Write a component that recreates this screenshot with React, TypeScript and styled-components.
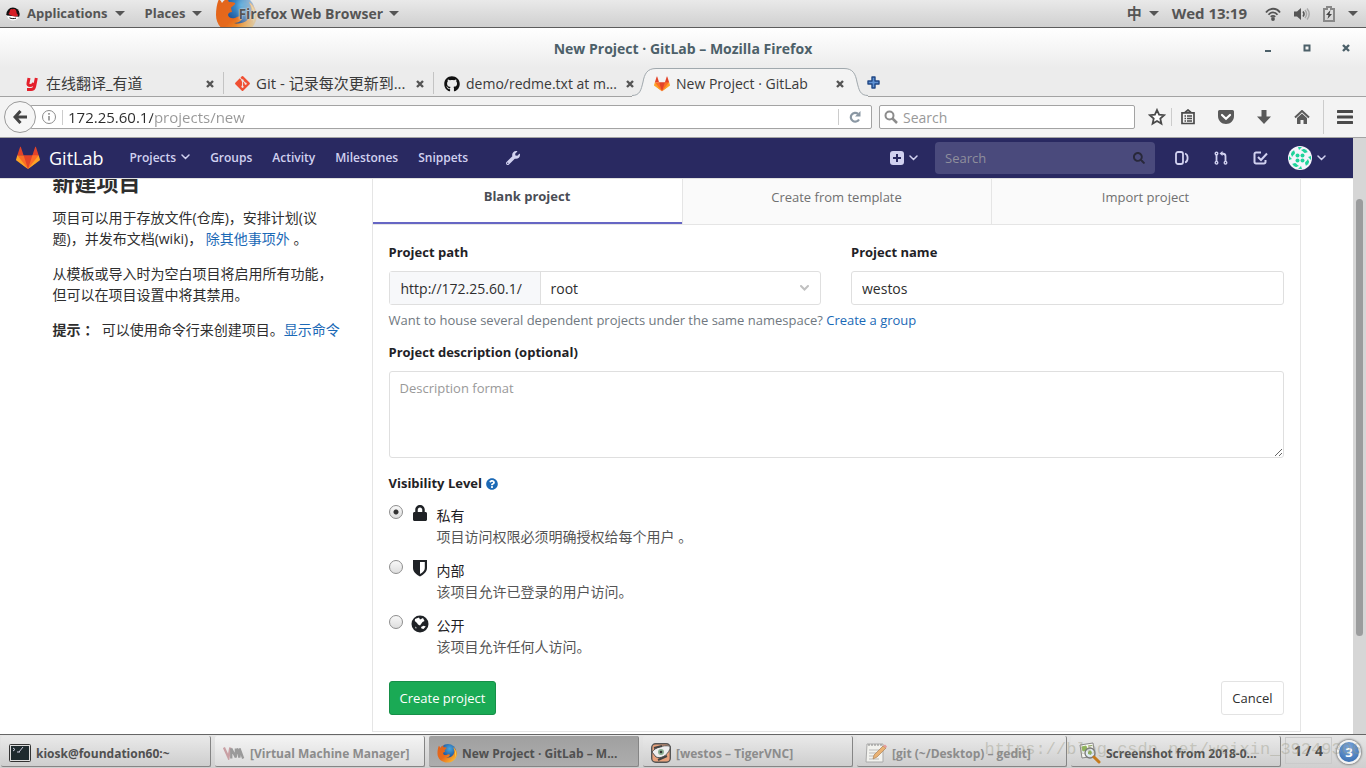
import React from "react";
import styled, { createGlobalStyle, css } from "styled-components";
import { FaGitAlt, FaGithub, FaWrench, FaQuestionCircle, FaSearch, FaLock } from "react-icons/fa";

const sans = `"Open Sans", "Noto Sans CJK SC", sans-serif`;

const GlobalStyle = createGlobalStyle`
  *, *::before, *::after { box-sizing: border-box; }
  body { margin: 0; overflow: hidden; font-family: ${sans}; font-size: 13px; line-height: 21px; color: #2e2e2e; background: #fff; }
  svg { display: block; flex: none; }
  button, input, select, textarea { font: inherit; color: inherit; }
  a { color: #1b69b6; text-decoration: none; }
`;

/* ---------- Desktop ---------- */

const Desktop = styled.div`
  display: flex;
  flex-direction: column;
  height: 100vh;
`;

const Panel = styled.header`
  flex: none;
  display: flex;
  justify-content: space-between;
  height: 28px;
  padding: 0 8px 0 6px;
  overflow: hidden;
  background: linear-gradient(#e9e9e9, #d0d0d0);
  border-bottom: 1px solid #5c5c5c;
`;

const PanelGroup = styled.div<{ $gap: number }>`
  display: flex;
  align-items: center;
  gap: ${(p) => p.$gap}px;
`;

const PanelButton = styled.button<{ $size?: number }>`
  display: flex;
  align-items: center;
  gap: 7px;
  padding: 0;
  border: 0;
  background: none;
  color: #555;
  font-size: ${(p) => p.$size ?? 13}px;
  font-weight: 700;
  white-space: nowrap;
`;

const AppButton = styled(PanelButton)`
  margin-left: -7px;
  gap: 6px;
`;

const Clock = styled(PanelButton)`
  margin-right: 5px;
`;

const PanelFirefox = styled.span`
  display: block;
  mask-image: linear-gradient(90deg, #000 50%, rgba(0, 0, 0, 0.2));
`;

const FirefoxLabel = styled.span`
  position: relative;
  margin-left: -25px;
  text-shadow: 0 0 2px #e4e4e4, 0 0 1px #e4e4e4;
`;

/* ---------- Browser window ---------- */

const Window = styled.main`
  flex: 1;
  min-height: 0;
  display: flex;
  flex-direction: column;
`;

const WindowTop = styled.div`
  flex: none;
  height: 69px;
  background: linear-gradient(#fff, #ececec 40px);
  border-bottom: 1px solid #a3a3a3;
`;

const TitleBar = styled.div`
  display: grid;
  grid-template-columns: 1fr auto 1fr;
  align-items: center;
  height: 40px;
  padding: 0 13px;
  color: #4c6069;
  font-size: 14px;
  font-weight: 700;
`;

const WindowButtons = styled.div`
  grid-column: 3;
  display: flex;
  justify-content: flex-end;
  gap: 24px;
`;

const WindowButton = styled.button`
  display: flex;
  align-items: center;
  justify-content: center;
  width: 15px;
  height: 16px;
  padding: 0;
  border: 0;
  background: none;
  color: #4c6069;
`;

const WindowTitle = styled.div`
  grid-column: 2;
`;

const TabStrip = styled.div`
  display: flex;
  height: 29px;
  padding-left: 14px;
`;

const TabItem = styled.div<{ $divider?: boolean; $size?: number }>`
  position: relative;
  flex: 0 1 210px;
  min-width: 0;
  display: flex;
  align-items: center;
  gap: 6px;
  padding: 2px 9px 0 10px;
  font-size: ${(p) => p.$size ?? 14}px;
  color: #3a3a3a;
  ${(p) =>
    p.$divider &&
    css`
      background: linear-gradient(#c4c4c4, #c4c4c4) right 4px / 1px 22px no-repeat;
    `}
`;

const TabShape = styled.svg`
  position: absolute;
  left: -12px;
  top: 0;
  width: 236px;
  height: 29px;
`;

const TabIcon = styled.span`
  position: relative;
  flex: none;
  width: 16px;
  display: flex;
  justify-content: center;
`;

const TabTitle = styled.span`
  position: relative;
  flex: 1;
  white-space: nowrap;
`;

const IconButton = styled.button<{ $w?: number }>`
  position: relative;
  flex: none;
  display: flex;
  align-items: center;
  justify-content: center;
  width: ${(p) => p.$w ?? 10}px;
  padding: 0;
  border: 0;
  background: none;
  color: #555;
`;

const NewTab = styled(IconButton)`
  margin-left: 13px;
`;

const Toolbar = styled.div`
  flex: none;
  display: flex;
  align-items: center;
  height: 41px;
  padding: 0 11px 0 4px;
  background: #f3f3f3;
  border-bottom: 1px solid #a3a3a3;
`;

const BackButton = styled.button`
  position: relative;
  z-index: 1;
  flex: none;
  display: flex;
  align-items: center;
  justify-content: center;
  width: 32px;
  height: 32px;
  padding: 0;
  border: 1px solid #9a9a9a;
  border-radius: 50%;
  background: #f6f6f6;
`;

const UrlBox = styled.div`
  flex: 1;
  display: flex;
  align-items: center;
  height: 24px;
  margin-left: -6px;
  padding-left: 11px;
  border: 1px solid #a3a3a3;
  border-radius: 2px;
  background: #fff;
`;

const Divider = styled.span<{ $h: number; $ml: number; $mr: number }>`
  flex: none;
  width: 1px;
  height: ${(p) => p.$h}px;
  margin: 0 ${(p) => p.$mr}px 0 ${(p) => p.$ml}px;
  background: #ccc;
`;

const UrlInput = styled.input`
  flex: 1;
  min-width: 0;
  height: 22px;
  padding: 0;
  border: 0;
  outline: 0;
  font-size: 15px;
  background: linear-gradient(90deg, #2b2b2b 85px, #979797 85px);
  background-clip: text;
  -webkit-text-fill-color: transparent;
`;

const FindBox = styled.label`
  flex: none;
  display: flex;
  align-items: center;
  gap: 5px;
  width: 256px;
  height: 24px;
  margin: 0 12px 0 7px;
  padding: 0 4px;
  border: 1px solid #a3a3a3;
  border-radius: 2px;
  background: #fff;
`;

const FindInput = styled.input`
  flex: 1;
  min-width: 0;
  height: 22px;
  padding: 0;
  border: 0;
  outline: 0;
  font-size: 14px;
  background: none;
  &::placeholder { color: #999; opacity: 1; }
`;

const ToolButtons = styled.div`
  display: flex;
  align-items: center;
  gap: 18px;
`;

/* ---------- GitLab page ---------- */

const Viewport = styled.div`
  flex: 1;
  min-height: 0;
  display: flex;
`;

const Page = styled.div`
  flex: 1;
  min-width: 0;
  display: flex;
  flex-direction: column;
`;

const ScrollTrack = styled.div`
  flex: none;
  width: 13px;
  padding: 61px 3px 98px;
  display: flex;
  background: #d6d6d6;
`;

const ScrollThumb = styled.div`
  flex: 1;
  border-radius: 4px;
  background: #9b9c9d;
`;

const NavBar = styled.nav`
  flex: none;
  display: flex;
  align-items: center;
  justify-content: space-between;
  height: 41px;
  padding: 0 27px 0 16px;
  background: #292961;
  border-bottom: 1px solid #e0e0e0;
  color: #d1d1f0;
`;

const NavGroup = styled.div<{ $gap: number }>`
  display: flex;
  align-items: center;
  gap: ${(p) => p.$gap}px;
`;

const Brand = styled.a`
  display: flex;
  align-items: center;
  gap: 9px;
  margin-right: 6px;
  color: #fff;
  font-size: 18px;
`;

const NavLink = styled.a`
  display: flex;
  align-items: center;
  gap: 5px;
  padding-bottom: 2px;
  color: #d1d1f0;
  font-size: 12px;
  font-weight: 600;
`;

const NavIcon = styled.a<{ $apart?: boolean }>`
  display: flex;
  align-items: center;
  gap: 5px;
  margin-left: ${(p) => (p.$apart ? 18 : 0)}px;
  color: #d1d1f0;
`;

const NavSearch = styled.label`
  display: flex;
  align-items: center;
  width: 220px;
  height: 32px;
  padding: 0 10px;
  border-radius: 4px;
  background: #4a4a7c;
  color: #28283a;
`;

const NavSearchInput = styled.input`
  flex: 1;
  min-width: 0;
  padding: 0;
  border: 0;
  outline: 0;
  background: none;
  &::placeholder { color: #8f8f9c; opacity: 1; }
`;

const Scroller = styled.div`
  flex: 1;
  min-height: 0;
  overflow: hidden;
`;

const Container = styled.div`
  display: grid;
  grid-template-columns: 287px 1fr;
  gap: 32px;
  max-width: 1280px;
  margin: -9px auto 0;
  padding: 0 16px;
`;

const Aside = styled.aside`
  font-size: 14px;
  color: #2e2e2e;
  white-space: nowrap;
`;

const Heading = styled.h1`
  margin: 0 0 13px;
  font-size: 22px;
  line-height: 24px;
  font-weight: 700;
`;

const Para = styled.p`
  margin: 0 0 14px;
`;

const Card = styled.section`
  border: 1px solid #e5e5e5;
  border-top: 0;
`;

const ProjectTabs = styled.div`
  display: grid;
  grid-template-columns: repeat(3, 1fr);
  height: 55px;
  border-bottom: 1px solid #e5e5e5;
`;

const ProjectTab = styled.button<{ $active?: boolean }>`
  padding: 0;
  border: 0;
  border-left: 1px solid #e5e5e5;
  background: #fafafa;
  color: #707070;
  &:first-child { border-left: 0; }
  ${(p) =>
    p.$active &&
    css`
      background: #fff;
      color: #4a4d55;
      font-weight: 700;
      border-bottom: 2px solid #6666c4;
    `}
`;

const Form = styled.form`
  padding: 17px 16px 16px;
`;

const Columns = styled.div`
  display: grid;
  grid-template-columns: 1fr 1fr;
  gap: 30px;
`;

const Label = styled.label`
  display: block;
  margin-bottom: 8px;
  font-weight: 700;
  color: #1f2226;
`;

const Group = styled.div`
  display: flex;
  height: 34px;
  border: 1px solid #dfdfdf;
  border-radius: 3px;
  font-size: 14px;
`;

const Prefix = styled.span`
  flex: none;
  display: flex;
  align-items: center;
  width: 151px;
  padding-left: 11px;
  border-right: 1px solid #dfdfdf;
  background: #f7f8fa;
`;

const SelectWrap = styled.span`
  position: relative;
  flex: 1;
  display: flex;
  align-items: center;
`;

const Select = styled.select`
  width: 100%;
  height: 100%;
  padding: 0 10px;
  border: 0;
  outline: 0;
  appearance: none;
  background: none;
`;

const SelectArrow = styled.span`
  position: absolute;
  right: 11px;
  color: #c0c0c0;
  pointer-events: none;
`;

const TextInput = styled.input`
  display: block;
  width: 100%;
  height: 34px;
  padding: 0 10px;
  border: 1px solid #dfdfdf;
  border-radius: 3px;
  outline: 0;
  font-size: 14px;
`;

const Help = styled.p`
  margin: 5px 0 11px;
  color: #707880;
`;

const TextArea = styled.textarea`
  display: block;
  width: 100%;
  height: 87px;
  padding: 6px 10px;
  border: 1px solid #dfdfdf;
  border-radius: 3px;
  outline: 0;
  resize: vertical;
  &::placeholder { color: #999; opacity: 1; }
`;

const FieldSet = styled.fieldset`
  min-width: 0;
  margin: 15px 0 24px;
  padding: 0;
  border: 0;
`;

const Legend = styled.legend`
  display: flex;
  align-items: center;
  gap: 4px;
  margin-bottom: 11px;
  padding: 0;
  font-weight: 700;
  color: #1f2226;
`;

const Option = styled.label`
  display: grid;
  grid-template-columns: 14px 18px 1fr;
  column-gap: 8px;
  margin-bottom: 13px;
  font-size: 14px;
  color: #1f2226;
  &:last-child { margin-bottom: 0; }
`;

const OptionIcon = styled.span`
  display: flex;
  justify-content: center;
`;

const OptionNote = styled.span`
  display: block;
  color: #555;
`;

const Radio = styled.input`
  appearance: none;
  width: 14px;
  height: 14px;
  margin: 0;
  border: 1px solid #8e8e8e;
  border-radius: 50%;
  background: linear-gradient(#f8f8f8, #dedede);
  &:checked { background: radial-gradient(circle, #333 2px, transparent 3px), linear-gradient(#f8f8f8, #dedede); }
`;

const Actions = styled.div`
  display: flex;
  justify-content: space-between;
`;

const ActionButton = styled.button<{ $primary?: boolean }>`
  height: 34px;
  padding: 0 10px;
  border: 1px solid ${(p) => (p.$primary ? "#168f48" : "#e3e3e3")};
  border-radius: 3px;
  background: ${(p) => (p.$primary ? "#1aaa55" : "#fff")};
  color: ${(p) => (p.$primary ? "#fff" : "#2e2e2e")};
`;

/* ---------- Task bar ---------- */

const TaskBar = styled.footer`
  position: relative;
  flex: none;
  display: flex;
  align-items: stretch;
  gap: 4px;
  height: 34px;
  padding: 1px 5px 1px 1px;
  overflow: hidden;
  background: linear-gradient(#e6e6e6, #cfcfcf);
  border-top: 1px solid #666;
`;

const Task = styled.button<{ $state?: "active" | "minimised" | "urgent" }>`
  flex: 0 0 210px;
  min-width: 0;
  display: flex;
  align-items: center;
  gap: 5px;
  padding: 3px 8px 0;
  border: 0;
  border-right: 1px solid #858585;
  border-bottom: 1px solid #858585;
  border-radius: 2px;
  background: ${(p) =>
    p.$state === "active" ? "linear-gradient(#a0a0a0, #adadad)" : p.$state === "urgent" ? "linear-gradient(#f4f4f4, #dcdcdc)" : "linear-gradient(#e9e9e9, #cecece)"};
  color: ${(p) => (p.$state === "minimised" || p.$state === "urgent" ? "#8c8c8c" : "#505050")};
  font-size: 12px;
  font-weight: 700;
  text-align: left;
`;

const TaskTitle = styled.span`
  flex: 1;
  padding-top: 2px;
  white-space: nowrap;
`;

const Workspace = styled.button`
  flex: none;
  width: 47px;
  margin: 1px 0 3px;
  padding: 0;
  border: 1px solid #cacaca;
  background: none;
  color: #4c4c4c;
  font-size: 14px;
  font-weight: 700;
`;

const Notice = styled.button`
  flex: none;
  align-self: center;
  width: 24px;
  height: 24px;
  margin-left: 1px;
  padding: 0;
  border: 2px solid #f4f4f4;
  border-radius: 50%;
  background: radial-gradient(circle at 50% 30%, #7ba7dc, #2f65ab);
  box-shadow: 0 0 2px 1px #888;
  color: #fff;
  font-weight: 700;
  line-height: 20px;
`;

const Watermark = styled.span`
  position: absolute;
  right: 4px;
  top: 4px;
  font-family: "Liberation Mono", monospace;
  font-size: 17px;
  color: rgba(150, 150, 130, 0.4);
  pointer-events: none;
  white-space: nowrap;
`;

/* ---------- Drawings ---------- */

const Caret = () => (
  <svg width="10" height="5" viewBox="0 0 10 5"><path d="M0 0h10L5 5z" fill="#555" /></svg>
);

const Chevron = ({ width = 1.5 }: { width?: number }) => (
  <svg width="9" height="6" viewBox="0 0 9 6"><path d="M1 1l3.500 3.500L8 1" fill="none" stroke="currentColor" strokeWidth={width} strokeLinecap="round" /></svg>
);

const Cross = () => (
  <svg width="10" height="10" viewBox="0 0 10 10"><path d="M2 2l6 6M8 2L2 8" stroke="currentColor" strokeWidth="2.400" /></svg>
);

const Tanuki = ({ size }: { size: number }) => (
  <svg width={size} height={size} viewBox="0 0 36 36">
    <path fill="#e24329" d="M2 14l9.380 9v-9l-4-12.280c-.205-.632-1.176-.632-1.380 0zM34 14l-9.380 9v-9l4-12.280c.205-.632 1.176-.632 1.380 0zM18 34.380L3 14h30z" />
    <path fill="#fc6d26" d="M18 34.380L11.380 14H2l4 11zM18 34.380L24.620 14H34l-4 11z" />
    <path fill="#fca326" d="M2 14L.1 20.160c-.18.565 0 1.200.5 1.560l17.420 12.660zM34 14l1.900 6.160c.18.565 0 1.200-.5 1.560L18 34.380z" />
  </svg>
);

const RedHat = () => (
  <svg width="14" height="14" viewBox="0 0 14 14">
    <circle cx="7" cy="7" r="6.500" fill="#fff" />
    <path d="M.3 7.500A6.700 6.700 0 0 1 13.700 7c0 1-.3 2-.7 2.800L1 8.500z" fill="#111" />
    <path d="M3.500 5.500C3.800 3 4.700 1.800 6 2.200c1.200.3 2-.6 3.300.3 1.200.9 1.200 3 1.600 4.300.8.500 1.600 1.200.9 2-1.300 1.300-5.400.6-8-1C2.200 6.900 2.300 6 3.500 5.500z" fill="#d41f26" />
    <path d="M3.500 10.800c2 1 4.500 1 6.500.4" stroke="#111" strokeWidth="1" fill="none" />
  </svg>
);

const Firefox = ({ size }: { size: number }) => (
  <svg width={size} height={size} viewBox="0 0 42 42">
    <defs>
      <radialGradient id={`globe${size}`} cx=".6" cy=".3" r=".7"><stop offset="0" stopColor="#49a6dd" /><stop offset=".6" stopColor="#2563a8" /><stop offset="1" stopColor="#1c2f66" /></radialGradient>
      <linearGradient id={`fox${size}`} x1="0" y1="0" x2="1" y2="1"><stop offset="0" stopColor="#e2631b" /><stop offset=".5" stopColor="#e66a1c" /><stop offset="1" stopColor="#ffd23c" /></linearGradient>
    </defs>
    <circle cx="23" cy="19" r="17" fill={`url(#globe${size})`} />
    <path fill={`url(#fox${size})`} d="M4 6c1 1 2 2 3 4 2-3 4-4 7-5-1 2-1 3 0 4 2 0 5 0 6 1 1 2-3 3-4 5l1 4c-2 0-4 1-4 3 1 4 6 4 9 2 3-1 5 0 5 2-2 3-5 4-8 4 8 2 15-2 17-9 1-4 0-8-2-12 5 3 8 9 8 14-1 11-10 18-20 18C10 41 1 33 1 22 1 16 2 10 4 6z" />
    <path fill="#ffd23c" d="M34 9c6 6 8 14 4 21 1-8 0-15-4-21z" />
  </svg>
);

const Wifi = () => (
  <svg width="16" height="14" viewBox="0 0 16 14" fill="none" stroke="#555" strokeWidth="1.800">
    <path d="M1 5.500C4.500.500 11.500.500 15 5.500" /><path d="M3.500 7.800c2.500-3.300 6.500-3.300 9 0" /><path d="M5.800 9.900c1.200-1.500 3.200-1.500 4.400 0" /><circle cx="8" cy="12" r="1" fill="#555" />
  </svg>
);

const Volume = () => (
  <svg width="16" height="14" viewBox="0 0 16 14" fill="none" strokeWidth="1.500">
    <path d="M0 4.500h3L7 1v12L3 9.500H0z" fill="#555" /><path d="M9 4.500c1.300 1.500 1.300 3.500 0 5" stroke="#555" /><path d="M11 3c2 2.500 2 5.500 0 8M13 1.500c2.800 3.500 2.800 7.500 0 11" stroke="#aaa" />
  </svg>
);

const Battery = () => (
  <svg width="12" height="16" viewBox="0 0 12 16">
    <path d="M4 1h4v2h3v12H1V3h3z" fill="none" stroke="#888" strokeWidth="2" /><path d="M7.500 4L3 9h2.500L4.500 13 9 8H6.500z" fill="#444" />
  </svg>
);

const Youdao = () => (
  <svg width="14" height="14" viewBox="0 0 14 14" fill="none" stroke="#e4202c" strokeWidth="3">
    <path d="M4 1L3 6.200c-.3 1.600.6 2.300 2 2.300 1.800 0 3.200-1 3.700-2.700M11.300 1L9.600 9.500c-.4 2-1.600 3-3.500 3H2" />
  </svg>
);

const Lens = ({ size = 14 }: { size?: number }) => (
  <svg width={size} height={size} viewBox="0 0 14 14" fill="none" stroke="#8c8c8c" strokeWidth="2"><circle cx="5.500" cy="5.500" r="4" /><path d="M8.500 8.500L13 13" strokeWidth="2.500" /></svg>
);

const Plus = () => (
  <svg width="13" height="13" viewBox="0 0 13 13"><path d="M5 1h3v4h4v3H8v4H5V8H1V5h4z" fill="#5f92d4" stroke="#1f4684" strokeWidth="1.400" strokeLinejoin="round" /></svg>
);

const Issues = () => (
  <svg width="14" height="14" viewBox="0 0 14 14" fill="none" stroke="currentColor" strokeWidth="1.800"><rect x="1" y="1" width="7" height="12" rx="2" /><path d="M10 2.500c3.500 1 3.500 8 0 9" /></svg>
);

const MergeRequests = () => (
  <svg width="14" height="14" viewBox="0 0 14 14" fill="none" stroke="currentColor" strokeWidth="1.400">
    <circle cx="2.500" cy="2.500" r="1.300" /><circle cx="2.500" cy="11.700" r="1.300" /><circle cx="11.500" cy="11.700" r="1.300" /><path d="M2.500 4v6.500M11.500 10.500V5c0-2-1-2.500-4-2.500" strokeWidth="1.800" /><path d="M8.500 0v5L5.500 2.500z" fill="currentColor" stroke="none" />
  </svg>
);

const Todos = () => (
  <svg width="15" height="14" viewBox="0 0 15 14" fill="none" stroke="currentColor" strokeWidth="2"><path d="M8 1.500H3a1.500 1.500 0 0 0-1.500 1.500v8A1.500 1.500 0 0 0 3 12.500h8a1.500 1.500 0 0 0 1.500-1.500V9" /><path d="M5 6l3 3 6-6.500" /></svg>
);

const Avatar = () => (
  <svg width="24" height="24" viewBox="0 0 24 24">
    <circle cx="12" cy="12" r="12" fill="#f4f4fb" />
    <g fill="#1fd49a">
      {[0, 90, 180, 270].map((a) => (
        <g key={a} transform={`rotate(${a} 12 12)`}>
          <circle cx="9.500" cy="9.500" r="2" />
          <path d="M3 8l3-4 1 3-3 4zM10 1h4l-3 3zM15 3l4 1-3 3z" />
        </g>
      ))}
    </g>
  </svg>
);

const Shield = () => (
  <svg width="16" height="18" viewBox="0 0 16 18"><path fillRule="evenodd" d="M1 0h14v8c0 4-3.500 6.500-7 8.500C4.500 14.500 1 12 1 8zM8 2v12c3-1.800 4.800-3.500 4.800-6V2z" fill="#1f2226" /></svg>
);

const Globe = () => (
  <svg width="18" height="18" viewBox="0 0 18 18"><circle cx="9" cy="9" r="8.500" fill="#1f2226" /><path d="M4 4l4-1.500 1 2L12 3l1.500 3-2 1L9 10.500l-2-1L6 8 3.800 6zM10 12l2.500-1.300 2.300.8L12.500 14 10.500 13.500zM4 11.500l1.500 1-.5 1.500z" fill="#fff" /></svg>
);

const Terminal = () => (
  <svg width="22" height="18" viewBox="0 0 22 18"><rect x=".5" y=".5" width="21" height="17" rx="1" fill="#ddd" stroke="#333" /><rect x="2" y="2" width="18" height="14" fill="#1e2a2e" /><path d="M4 4l2 1.500L4 7M8 8h3M10 8l4-5" stroke="#ccd" fill="none" /></svg>
);

const VirtManager = () => (
  <svg width="22" height="14" viewBox="0 0 24 14" fill="none" strokeWidth="2.500"><path d="M1 1l5 11 2-11" stroke="#c9a0a4" /><path d="M9 13V2l5 10V2M15 2l3 10V2l4 11" stroke="#9a9a9a" /></svg>
);

const Tiger = () => (
  <svg width="20" height="20" viewBox="0 0 20 20"><rect x=".7" y=".7" width="18.600" height="18.600" rx="4" fill="#e8a27c" stroke="#555" strokeWidth="1.400" /><path d="M1 9c4-5 10-7 18-6v3c-3 7-9 10-14 8z" fill="#eee" stroke="#555" /><path d="M3 5l8-2M7 17l9-4" stroke="#444" strokeWidth="2" /><circle cx="10" cy="9" r="3" fill="#8bb093" /><circle cx="10" cy="9" r="1.300" fill="#333" /></svg>
);

const Gedit = () => (
  <svg width="22" height="22" viewBox="0 0 22 22"><path d="M2 2h16v18H1z" fill="#f2f2ee" stroke="#aaa" /><path d="M4 2v2M7 2v2M10 2v2M13 2v2M16 2v2" stroke="#888" /><path d="M4 8h11M4 11h11M4 14h6M4 17h10" stroke="#bbb" /><path d="M8 17l1-4 9-9 3 2-9 9z" fill="#eab274" stroke="#a98259" strokeWidth=".7" /><path d="M18 4l2-1.500 2 2L21 6z" fill="#e59a9a" /></svg>
);

const ImageViewer = () => (
  <svg width="22" height="22" viewBox="0 0 22 22"><path d="M1 3l13-2 2 13-13 2z" fill="#f7f7f2" stroke="#888" /><path d="M3 5l4-1 1 4-4 1zM9 4l4-.5" fill="#8fb45a" stroke="#8fb45a" /><circle cx="11" cy="7" r="1.500" fill="#e5b93c" /><circle cx="11" cy="11" r="5" fill="#dce9f5" fillOpacity=".85" stroke="#777" strokeWidth="1.300" /><path d="M9 10l2-2 2 2-1 3-3-1z" fill="#8fb45a" /><path d="M15 15l5 5" stroke="#c67a1c" strokeWidth="3" strokeLinecap="round" /></svg>
);

const tabs = [
  { title: "在线翻译_有道", icon: <Youdao />, size: 15 },
  { title: "Git - 记录每次更新到...", icon: <FaGitAlt size={17} color="#f05033" />, size: 15 },
  { title: "demo/redme.txt at m...", icon: <FaGithub size={16} color="#111" /> },
  { title: "New Project · GitLab", icon: <Tanuki size={16} />, active: true },
];

const levels = [
  { name: "私有", note: "项目访问权限必须明确授权给每个用户 。", icon: <FaLock size={16} /> },
  { name: "内部", note: "该项目允许已登录的用户访问。", icon: <Shield /> },
  { name: "公开", note: "该项目允许任何人访问。", icon: <Globe /> },
];

const tasks: { title: string; icon: React.ReactNode; state?: "active" | "minimised" | "urgent" }[] = [
  { title: "kiosk@foundation60:~", icon: <Terminal /> },
  { title: "[Virtual Machine Manager]", icon: <VirtManager />, state: "urgent" },
  { title: "New Project · GitLab – M...", icon: <Firefox size={20} />, state: "active" },
  { title: "[westos – TigerVNC]", icon: <Tiger />, state: "minimised" },
  { title: "[git (~/Desktop) – gedit]", icon: <Gedit />, state: "minimised" },
  { title: "Screenshot from 2018-0...", icon: <ImageViewer /> },
];

export default function App() {
  return (
    <Desktop>
      <GlobalStyle />
      <Panel>
        <PanelGroup $gap={20}>
          <PanelButton><RedHat />Applications<Caret /></PanelButton>
          <PanelButton>Places<Caret /></PanelButton>
          <AppButton $size={14}><PanelFirefox><Firefox size={42} /></PanelFirefox><FirefoxLabel>Firefox Web Browser</FirefoxLabel><Caret /></AppButton>
        </PanelGroup>
        <PanelGroup $gap={13}>
          <PanelButton $size={15}>中<Caret /></PanelButton>
          <Clock $size={15}>Wed 13:19</Clock>
          <PanelButton aria-label="Network"><Wifi /></PanelButton>
          <PanelButton aria-label="Volume"><Volume /></PanelButton>
          <PanelButton aria-label="Battery"><Battery /></PanelButton>
          <PanelButton aria-label="System menu"><Caret /></PanelButton>
        </PanelGroup>
      </Panel>

      <Window>
        <WindowTop>
          <TitleBar>
            <WindowTitle>New Project · GitLab – Mozilla Firefox</WindowTitle>
            <WindowButtons>
              <WindowButton aria-label="Minimise"><svg width="8" height="8"><path d="M1 6h6v2H1z" fill="currentColor" /></svg></WindowButton>
              <WindowButton aria-label="Maximise"><svg width="8" height="8"><path d="M1.500 1.500h5v5h-5z" fill="none" stroke="currentColor" strokeWidth="2" /></svg></WindowButton>
              <WindowButton aria-label="Close"><Cross /></WindowButton>
            </WindowButtons>
          </TitleBar>
          <TabStrip>
            {tabs.map((t, i) => (
              <TabItem key={t.title} $divider={i < 2} $size={t.size}>
                {t.active && (
                  <TabShape viewBox="0 0 236 29">
                    <path d="M0 27.500C8 27.500 9 22 11 14 12.500 6 15 .5 24 .5h188c9 0 11.500 5.500 13 13.500 2 8 3 13.500 11 13.500V29H0z" fill="#f3f3f3" />
                    <path d="M0 27.500C8 27.500 9 22 11 14 12.500 6 15 .5 24 .5h188c9 0 11.500 5.500 13 13.500 2 8 3 13.500 11 13.500" fill="none" stroke="#a0a8ad" />
                  </TabShape>
                )}
                <TabIcon>{t.icon}</TabIcon>
                <TabTitle>{t.title}</TabTitle>
                <IconButton aria-label="Close tab"><Cross /></IconButton>
              </TabItem>
            ))}
            <NewTab $w={13} aria-label="New tab"><Plus /></NewTab>
          </TabStrip>
        </WindowTop>

        <Toolbar>
          <BackButton aria-label="Back">
            <svg width="14" height="14" viewBox="0 0 14 14" fill="none" stroke="#444" strokeWidth="3"><path d="M7.500 1L2 7l5.500 6M2 7h12" /></svg>
          </BackButton>
          <UrlBox>
            <svg width="14" height="14" viewBox="0 0 14 14" fill="none" stroke="#8c8c8c"><circle cx="7" cy="7" r="6.500" /><path d="M7 6v4.500M7 3v1.700" strokeWidth="1.600" /></svg>
            <Divider $h={15} $ml={6} $mr={5} />
            <UrlInput aria-label="Address" defaultValue="172.25.60.1/projects/new" />
            <Divider $h={16} $ml={0} $mr={8} />
            <IconButton $w={15} aria-label="Reload">
              <svg width="12" height="12" viewBox="0 0 12 12" fill="none" stroke="#8a97a3" strokeWidth="2.200"><path d="M10 8.500A4.400 4.400 0 1 1 9 2.800" /><path d="M11.500 0v5.500H6z" fill="#8a97a3" stroke="none" /></svg>
            </IconButton>
            <Divider $h={0} $ml={0} $mr={8} />
          </UrlBox>
          <FindBox><Lens /><FindInput aria-label="Search the web" placeholder="Search" /></FindBox>
          <ToolButtons>
            <IconButton $w={20} aria-label="Bookmark"><svg width="18" height="18" viewBox="0 0 18 18"><path d="M9 2l2.100 4.700 5 .5-3.800 3.400 1.100 5L9 13l-4.400 2.600 1.100-5L1.900 7.200l5-.5z" fill="#fff" stroke="#4a4a4a" strokeWidth="1.800" /></svg></IconButton>
          </ToolButtons>
          <Divider $h={18} $ml={4} $mr={6} />
          <ToolButtons>
            <IconButton $w={20} aria-label="Bookmarks list"><svg width="16" height="16" viewBox="0 0 16 16" fill="none" stroke="#4a4a4a" strokeWidth="1.700"><path d="M5 3.500L8 1l3 2.500M2 3.800h12v10.700H2z" /><path d="M4.500 7h1.500M7 7h5M4.500 9.500h1.500M7 9.500h5M4.500 12h1.500M7 12h5" strokeWidth="1.300" /></svg></IconButton>
            <IconButton $w={20} aria-label="Pocket"><svg width="16" height="14" viewBox="0 0 16 14"><path d="M1.500 0h13A1.500 1.500 0 0 1 16 1.500V6c0 4.500-3.500 8-8 8S0 10.500 0 6V1.500A1.500 1.500 0 0 1 1.500 0z" fill="#5a5a5a" /><path d="M4 5l4 3.800L12 5" stroke="#fff" strokeWidth="2.200" fill="none" strokeLinecap="round" /></svg></IconButton>
            <IconButton $w={20} aria-label="Downloads"><svg width="14" height="14" viewBox="0 0 14 14"><path d="M4.500 0h5v6.500H14L7 14 0 6.500h4.500z" fill="#5a5a5a" /></svg></IconButton>
            <IconButton $w={20} aria-label="Home"><svg width="16" height="14" viewBox="0 0 16 14"><path d="M1 7.500L8 1l7 6.500" stroke="#5a5a5a" strokeWidth="2" fill="none" /><path d="M3 8l5-4.500L13 8v6H9.500v-4h-3v4H3z" fill="#5a5a5a" /></svg></IconButton>
          </ToolButtons>
          <Divider $h={34} $ml={11} $mr={11} />
          <IconButton $w={20} aria-label="Menu"><svg width="16" height="14" viewBox="0 0 16 14"><path d="M1 1.500h14M1 7h14M1 12.500h14" stroke="#4a4a4a" strokeWidth="3" strokeLinecap="round" /></svg></IconButton>
        </Toolbar>

        <Viewport>
          <Page>
            <NavBar>
              <NavGroup $gap={20}>
                <Brand href="#"><Tanuki size={24} />GitLab</Brand>
                <NavLink href="#">Projects<Chevron /></NavLink>
                <NavLink href="#">Groups</NavLink>
                <NavLink href="#">Activity</NavLink>
                <NavLink href="#">Milestones</NavLink>
                <NavLink href="#">Snippets</NavLink>
                <NavIcon $apart href="#" aria-label="Admin area"><FaWrench size={14} /></NavIcon>
              </NavGroup>
              <NavGroup $gap={20}>
                <NavGroup $gap={17}>
                  <NavIcon href="#" aria-label="New">
                    <svg width="14" height="14" viewBox="0 0 14 14"><rect width="14" height="14" rx="3" fill="currentColor" /><path d="M7 3v8M3 7h8" stroke="#292961" strokeWidth="2" /></svg>
                    <Chevron />
                  </NavIcon>
                  <NavSearch><NavSearchInput aria-label="Search GitLab" placeholder="Search" /><FaSearch size={12} /></NavSearch>
                </NavGroup>
                <NavGroup $gap={25}>
                  <NavIcon href="#" aria-label="Issues"><Issues /></NavIcon>
                  <NavIcon href="#" aria-label="Merge requests"><MergeRequests /></NavIcon>
                  <NavIcon href="#" aria-label="Todos"><Todos /></NavIcon>
                </NavGroup>
                <NavIcon href="#" aria-label="User"><Avatar /><Chevron /></NavIcon>
              </NavGroup>
            </NavBar>

            <Scroller>
              <Container>
                <Aside>
                  <Heading>新建项目</Heading>
                  <Para>项目可以用于存放文件(仓库)，安排计划(议<br />题)，并发布文档(wiki)， <a href="#">除其他事项外</a> 。</Para>
                  <Para>从模板或导入时为空白项目将启用所有功能，<br />但可以在项目设置中将其禁用。</Para>
                  <Para><b>提示 ：</b> 可以使用命令行来创建项目。<a href="#">显示命令</a></Para>
                </Aside>

                <Card>
                  <ProjectTabs>
                    <ProjectTab $active>Blank project</ProjectTab>
                    <ProjectTab>Create from template</ProjectTab>
                    <ProjectTab>Import project</ProjectTab>
                  </ProjectTabs>
                  <Form onSubmit={(e) => e.preventDefault()}>
                    <Columns>
                      <div>
                        <Label htmlFor="namespace">Project path</Label>
                        <Group>
                          <Prefix>http://172.25.60.1/</Prefix>
                          <SelectWrap>
                            <Select id="namespace"><option>root</option></Select>
                            <SelectArrow><Chevron width={2} /></SelectArrow>
                          </SelectWrap>
                        </Group>
                      </div>
                      <div>
                        <Label htmlFor="name">Project name</Label>
                        <TextInput id="name" defaultValue="westos" />
                      </div>
                    </Columns>
                    <Help>Want to house several dependent projects under the same namespace? <a href="#">Create a group</a></Help>
                    <Label htmlFor="description">Project description (optional)</Label>
                    <TextArea id="description" placeholder="Description format" />
                    <FieldSet>
                      <Legend>Visibility Level <FaQuestionCircle size={12} color="#1b69b6" /></Legend>
                      {levels.map((l, i) => (
                        <Option key={l.name}>
                          <Radio type="radio" name="visibility" defaultChecked={i === 0} />
                          <OptionIcon>{l.icon}</OptionIcon>
                          <span>{l.name}<OptionNote>{l.note}</OptionNote></span>
                        </Option>
                      ))}
                    </FieldSet>
                    <Actions>
                      <ActionButton $primary type="submit">Create project</ActionButton>
                      <ActionButton type="button">Cancel</ActionButton>
                    </Actions>
                  </Form>
                </Card>
              </Container>
            </Scroller>
          </Page>
          <ScrollTrack><ScrollThumb /></ScrollTrack>
        </Viewport>
      </Window>

      <TaskBar>
        {tasks.map((t) => (
          <Task key={t.title} $state={t.state}>{t.icon}<TaskTitle>{t.title}</TaskTitle></Task>
        ))}
        <Workspace>1 / 4</Workspace>
        <Notice>3</Notice>
        <Watermark>https://blog.csdn.net/weixin_39249306</Watermark>
      </TaskBar>
    </Desktop>
  );
}
